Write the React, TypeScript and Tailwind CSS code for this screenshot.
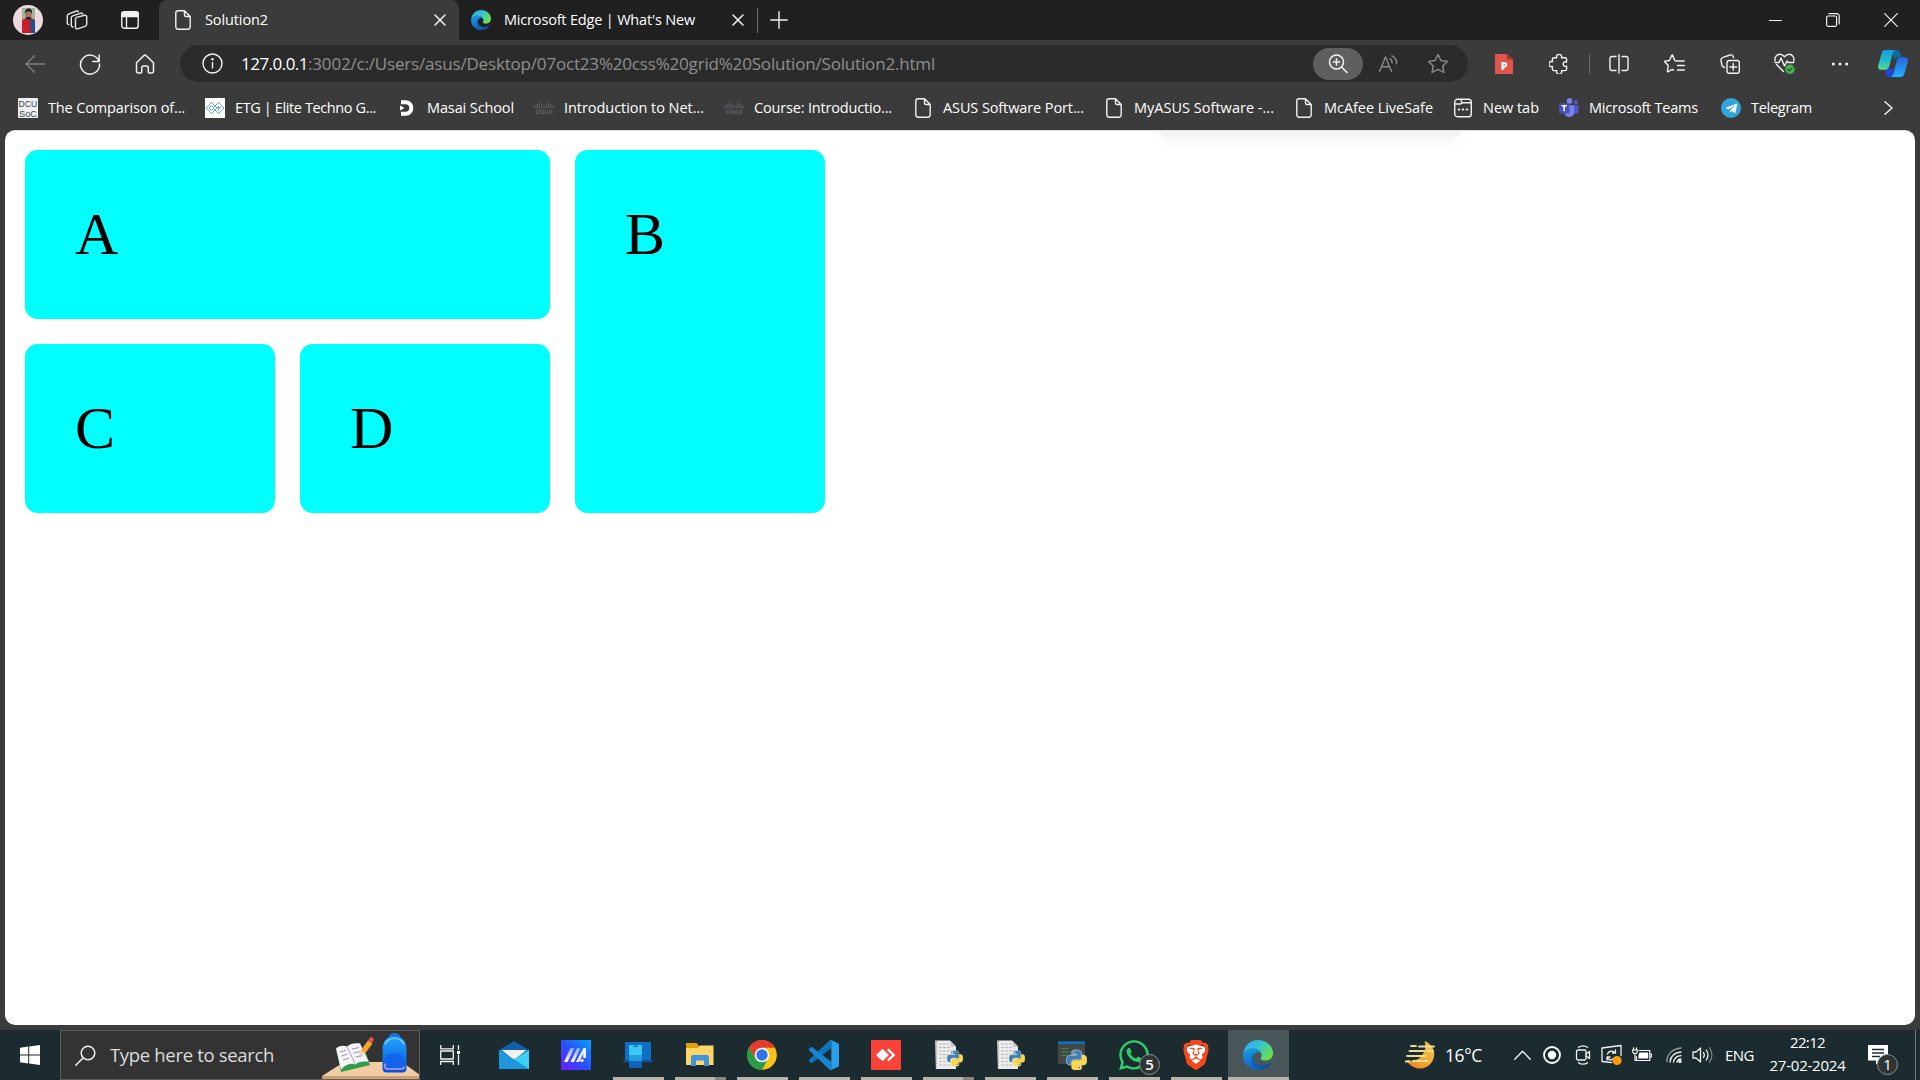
import { useLayoutEffect, useRef, type ReactNode } from "react";
import { FaWhatsapp, FaTelegramPlane } from "react-icons/fa";
import { SiBrave } from "react-icons/si";

/** One line of text whose tracking is tuned so that it spans `w` pixels. */
function Fit({ w, className = "", children }: { w: number; className?: string; children: string }) {
  const ref = useRef<HTMLSpanElement>(null);
  useLayoutEffect(() => {
    const el = ref.current;
    if (!el) return;
    el.style.letterSpacing = "0px";
    const natural = el.getBoundingClientRect().width;
    el.style.letterSpacing = `${(w - natural) / children.length}px`;
  }, [w, children]);
  return (
    <span ref={ref} className={`inline-block shrink-0 whitespace-pre ${className}`}>
      {children}
    </span>
  );
}

function Cell({ className, children }: { className: string; children?: ReactNode }) {
  return <div className={`flex shrink-0 items-center justify-center ${className}`}>{children}</div>;
}

function Line({
  size = 20,
  h,
  sw = 1.3,
  color = "#f2f2f2",
  children,
}: {
  size?: number;
  h?: number;
  sw?: number;
  color?: string;
  children: ReactNode;
}) {
  const hh = h ?? size;
  return (
    <svg
      className="shrink-0"
      width={size}
      height={hh}
      viewBox={`0 0 ${size} ${hh}`}
      fill="none"
      stroke={color}
      strokeWidth={sw}
      strokeLinecap="round"
      strokeLinejoin="round"
    >
      {children}
    </svg>
  );
}

const FileIcon = () => (
  <Line size={16} h={20} sw={1.4}>
    <path d="M3 .8h6.500l5.700 5.700V17a2.200 2.200 0 0 1-2.200 2.200H3A2.200 2.200 0 0 1 .8 17V3A2.200 2.200 0 0 1 3 .8zM9.500 .8v4.200A1.500 1.500 0 0 0 11 6.500h4.200" />
  </Line>
);

const CloseIcon = () => (
  <Line size={12} sw={1.5}>
    <path d="M1 1l10 10M11 1L1 11" />
  </Line>
);

function EdgeLogo({ size, id }: { size: number; id: string }) {
  return (
    <svg width={size} height={size} viewBox="0 0 30 30" className="shrink-0">
      <defs>
        <linearGradient id={`${id}a`} x1="0" y1="0" x2="1" y2=".55">
          <stop offset="0" stopColor="#2aa7e8" />
          <stop offset=".5" stopColor="#35c1d8" />
          <stop offset="1" stopColor="#67e04f" />
        </linearGradient>
        <linearGradient id={`${id}b`} x1="0" y1="0" x2=".3" y2="1">
          <stop offset="0" stopColor="#1b9de2" />
          <stop offset="1" stopColor="#1066c4" />
        </linearGradient>
        <linearGradient id={`${id}c`} x1="0" y1="0" x2="1" y2="0">
          <stop offset="0" stopColor="#1560b5" />
          <stop offset="1" stopColor="#0d4b91" />
        </linearGradient>
      </defs>
      <path
        d="M.3 13.500C1.200 5.800 7.200 0 15 0c8.700 0 15 6.300 15 13.200 0 4.600-3.600 7.400-7.500 7.400-3 0-4.900-1.100-4.900-2.200 0-.7 1-1.200 1-3.200 0-2.700-2.700-5.700-7.400-6.400C6.500 8.300 2.300 10.300.3 13.500z"
        fill={`url(#${id}a)`}
      />
      <path
        d="M0 15.500C.2 11.500 4.500 8.500 9.500 8.500c4.700 0 8.300 2.500 9 5.500-1-1.400-2.700-2.200-4.300-1.800-2.700.6-4.700 3.500-4.700 6.800 0 5 3.500 9.200 8.200 10.700-.9.200-1.800.3-2.700.3C6.500 30 0 23.500 0 15.500z"
        fill={`url(#${id}b)`}
      />
      <path
        d="M12.600 13.300c-1.400 1-2.300 2.500-2.300 4.200 0 4.500 4.500 7.700 9.700 7.700 3.100 0 5.600-1 7.500-2.200.5-.3 1 .1.700.6-2 3.300-5.700 6.200-10.500 6.200-5.900 0-9.500-5-9.500-10 0-3 1.700-5.400 4.400-6.500z"
        fill={`url(#${id}c)`}
      />
    </svg>
  );
}

const PY_BLUE =
  "M14.25.18l.9.2.73.26.59.3.45.32.34.34.25.34.16.33.1.3.04.26.02.2-.01.13V8.5l-.05.63-.13.55-.21.46-.26.38-.3.31-.33.25-.35.19-.35.14-.33.1-.3.07-.26.04-.21.02H8.77l-.69.05-.59.14-.5.22-.41.27-.33.32-.27.35-.2.36-.15.37-.1.35-.07.32-.04.27-.02.21v3.06H3.17l-.21-.03-.28-.07-.32-.12-.35-.18-.36-.26-.36-.36-.35-.46-.32-.59-.28-.73-.21-.88-.14-1.05-.05-1.23.06-1.22.16-1.04.24-.87.32-.71.36-.57.4-.44.42-.33.42-.24.4-.16.36-.1.32-.05.24-.01h.16l.06.01h8.16v-.83H6.18l-.01-2.75-.02-.37.05-.34.11-.31.17-.28.25-.26.31-.23.38-.2.44-.18.51-.15.58-.12.64-.1.71-.06.77-.04.84-.02 1.27.05zm-6.3 1.98l-.23.33-.08.41.08.41.23.34.33.22.41.09.41-.09.33-.22.23-.34.08-.41-.08-.41-.23-.33-.33-.22-.41-.09-.41.09z";
const PY_YELLOW =
  "M21.1 6.11l.28.06.32.12.35.18.36.27.36.35.35.47.32.59.28.73.21.88.14 1.04.05 1.23-.06 1.23-.16 1.04-.24.86-.32.71-.36.57-.4.45-.42.33-.42.24-.4.16-.36.09-.32.05-.24.02-.16-.01h-8.22v.82h5.84l.01 2.76.02.36-.05.34-.11.31-.17.29-.25.25-.31.24-.38.2-.44.17-.51.15-.58.13-.64.09-.71.07-.77.04-.84.01-1.27-.04-1.07-.14-.9-.2-.73-.25-.59-.3-.45-.33-.34-.34-.25-.34-.16-.33-.1-.3-.04-.25-.02-.2.01-.13v-5.34l.05-.64.13-.54.21-.46.26-.38.3-.32.33-.24.35-.2.35-.14.33-.1.3-.06.26-.04.21-.02.13-.01h5.84l.69-.05.59-.14.5-.21.41-.28.33-.32.27-.35.2-.36.15-.36.1-.35.07-.32.04-.28.02-.21V6.07h2.09l.14.01zm-6.47 14.25l-.23.33-.08.41.08.41.23.33.33.23.41.08.41-.08.33-.23.23-.33.08-.41-.08-.41-.23-.33-.33-.23-.41-.08-.41.08z";

const PySnakes = ({ transform }: { transform: string }) => (
  <g transform={transform}>
    <path d={PY_BLUE} fill="#3f7fb5" stroke="#dfe6ea" strokeWidth=".7" />
    <path d={PY_YELLOW} fill="#ffd83f" stroke="#f4ecd0" strokeWidth=".7" />
  </g>
);

/* ---------- tab strip ---------- */

function TabStrip() {
  return (
    <div className="flex h-[40px] items-center bg-[#202020]">
      <Cell className="w-[56px]">
        <svg width="30" height="30" viewBox="0 0 30 30">
          <defs>
            <clipPath id="av">
              <circle cx="15" cy="15" r="15" />
            </clipPath>
          </defs>
          <g clipPath="url(#av)">
            <rect width="30" height="30" fill="#ecd9de" />
            <rect x="9" y="3" width="13" height="25" fill="#9db59a" />
            <path d="M9 15l4-2h5l4 2v13H9z" fill="#c3202c" />
            <path d="M17 14l5 1.500V28h-4z" fill="#1d4f8c" />
            <ellipse cx="15.500" cy="9.500" rx="3.300" ry="4.600" fill="#a8765a" />
            <path d="M12 9c-.5-4 1.500-5.500 3.700-5.500S19.500 5 19 9c-.5-2-1.500-2.500-3.500-2.500S12.500 7 12 9zM13 12h5c0 2-1 2.800-2.500 2.800S13 14 13 12z" fill="#2a2222" />
          </g>
        </svg>
      </Cell>
      <Cell className="w-[42px]">
        <Line size={22} h={20} sw={1.4} color="#e6e6e6">
          <path d="M10.500 7.400L18.700 5.300a1.600 1.600 0 0 1 2 1.500v7.400a2.200 2.200 0 0 1-1.600 2.100l-7.600 2.500a1.500 1.500 0 0 1-2-1.400V9a1.600 1.600 0 0 1 1-1.600z" />
          <path d="M7 17A1.700 1.700 0 0 1 5.300 15.300V8a2.200 2.200 0 0 1 1.500-2.100l8.100-2.700a1.500 1.500 0 0 1 1.900.9" />
          <path d="M3 14.600A1.700 1.700 0 0 1 1.300 12.900V6a2.400 2.400 0 0 1 1.600-2.200L10.500 1a1.500 1.500 0 0 1 1.900.8" />
        </Line>
      </Cell>
      <Cell className="w-[61px] pl-[3px]">
        <Line size={18} sw={1.4}>
          <rect x=".8" y=".8" width="16.400" height="16.400" rx="2.500" />
          <path d="M1 1.500h16V5.500H1z" fill="#f2f2f2" />
          <path d="M5.500 6v11" />
        </Line>
      </Cell>

      <div className="flex h-full w-[300px] items-center rounded-t-[8px] bg-[#3b3b3b] pl-[16px]">
        <FileIcon />
        <div className="ml-[14px] w-[227px] pb-[2px]">
          <Fit w={63} className="text-[14.500px] text-white">Solution2</Fit>
        </div>
        <div className="pl-[2px]">
          <CloseIcon />
        </div>
      </div>

      <div className="flex h-full items-center pl-[12px]">
        <EdgeLogo size={20} id="tab" />
        <div className="ml-[13px] w-[228px] pb-[2px]">
          <Fit w={191} className="text-[14.500px] text-white">Microsoft Edge | What's New</Fit>
        </div>
        <CloseIcon />
        <div className="ml-[13px] h-[25px] w-px bg-[#6a6a6a]" />
        <div className="ml-[12px]">
          <Line size={18} sw={1.4}>
            <path d="M9 .8v16.400M.8 9h16.400" />
          </Line>
        </div>
      </div>

      <div className="ml-auto flex">
        <Cell className="w-[57px]">
          <Line size={13} sw={1.2}>
            <path d="M.5 6.500h12" />
          </Line>
        </Cell>
        <Cell className="w-[58px]">
          <Line size={14} sw={1.2}>
            <rect x=".6" y="3" width="10" height="10.300" rx="1.500" />
            <path d="M3 .7h8a2.200 2.200 0 0 1 2.200 2.200V11" />
          </Line>
        </Cell>
        <Cell className="w-[58px]">
          <Line size={14} sw={1.2}>
            <path d="M.7 .7l12.600 12.600M13.300 .7L.7 13.300" />
          </Line>
        </Cell>
      </div>
    </div>
  );
}

/* ---------- toolbar ---------- */

function Toolbar() {
  return (
    <div className="flex h-[47px] items-center pl-[7px]">
      <Cell className="w-[55px]">
        <Line size={20} h={18} sw={1.4} color="#7d7d7d">
          <path d="M19.500 9H1M9.500 .8L1 9l8.500 8.200" />
        </Line>
      </Cell>
      <Cell className="w-[55px]">
        <Line size={22} sw={1.500}>
          <path d="M20 8.500A9.500 9.500 0 1 0 20.500 11M20.200 2v6.500h-6.500" />
        </Line>
      </Cell>
      <Cell className="w-[55px]">
        <Line size={20} sw={1.500}>
          <path d="M1.500 8.800L8.700 1.700a1.900 1.900 0 0 1 2.600 0l7.200 7.100V17a2 2 0 0 1-2 2h-2.200a1 1 0 0 1-1-1v-4a2 2 0 0 0-2-2H8.700a2 2 0 0 0-2 2v4a1 1 0 0 1-1 1H3.500a2 2 0 0 1-2-2z" />
        </Line>
      </Cell>

      <div className="ml-[8px] flex h-[37px] w-[1288px] items-center rounded-full bg-[#2b2b2b] pl-[22px] pr-[6px]">
        <Line size={21} sw={1.400}>
          <circle cx="10.500" cy="10.500" r="9.500" />
          <path d="M10.500 9.500v5.500" />
          <circle cx="10.500" cy="6.300" r=".6" fill="#f2f2f2" />
        </Line>
        <div className="ml-[18px] flex items-center text-[17px]">
          <Fit w={67} className="text-white">127.0.0.1</Fit>
          <Fit w={627} className="text-[#8f8f8f]">
            :3002/c:/Users/asus/Desktop/07oct23%20css%20grid%20Solution/Solution2.html
          </Fit>
        </div>
        <Cell className="ml-auto h-[32px] w-[50px] rounded-full bg-[#5f5f5f]">
          <Line size={20} sw={1.500}>
            <circle cx="8.500" cy="8" r="7" />
            <path d="M13.500 13l5.500 5.500M8.500 5v6M5.500 8h6" />
          </Line>
        </Cell>
        <Cell className="w-[50px]">
          <Line size={20} color="#8b8b8b" sw={1.400}>
            <path d="M1.500 17.500L7.500 3l6 14.500M3.600 12.700h7.800M12 4.800c1.500.8 2.200 2.400 2 4M14 1.800c3.200 1.500 4.900 4.600 4.600 8" />
          </Line>
        </Cell>
        <Cell className="w-[49px]">
          <Line size={22} h={21} color="#8b8b8b" sw={1.400}>
            <path d="M11 1.500l2.900 6 6.600.9-4.800 4.600 1.200 6.500L11 16.400l-5.900 3.100 1.200-6.500L1.500 8.400l6.600-.9z" />
          </Line>
        </Cell>
      </div>

      <Cell className="ml-[8px] w-[55px]">
        <svg width="18" height="20" viewBox="0 0 18 20">
          <path d="M0 0h12l6 5.500V20H0z" fill="#e0554b" />
          <path d="M12 0l6 5.500h-6z" fill="#a93228" />
          <text x="9" y="15.500" textAnchor="middle" fontSize="10.500" fontWeight="800" fontFamily="Open Sans, sans-serif" fill="#fff">
            P
          </text>
        </svg>
      </Cell>
      <Cell className="w-[55px]">
        <Line size={20} h={20} sw={1.400}>
          <path d="M5 3.800h2.700a2.600 2.600 0 1 1 4.800 0H16a1.600 1.600 0 0 1 1.600 1.600v2.700a2.300 2.300 0 0 0-3.500 2c0 1.700 2 2.800 3.500 2V15a1.600 1.600 0 0 1-1.600 1.600h-3.500a2.600 2.600 0 1 1-4.800 0H5A1.600 1.600 0 0 1 3.400 15v-2.500a2.600 2.600 0 1 1 0-4.800V5.400A1.600 1.600 0 0 1 5 3.800z" />
        </Line>
      </Cell>
      <div className="ml-[3px] h-[20px] w-px bg-[#6a6a6a]" />
      <Cell className="ml-[1px] w-[55px]">
        <Line size={20} sw={1.400}>
          <path d="M7 2.500H3A2 2 0 0 0 1 4.500v10A2 2 0 0 0 3 16.500H7M13 2.500h4A2 2 0 0 1 19 4.500v10a2 2 0 0 1-2 2h-4M10 .5v18.500" />
        </Line>
      </Cell>
      <Cell className="w-[56px]">
        <Line size={21} h={20} sw={1.400}>
          <path d="M13 7l-2-.3L8.600 1.400a.4.400 0 0 0-.8 0L5.400 6.500l-4.300.6a.5.500 0 0 0-.2.900l3.400 3.500-.9 5.600a.5.500 0 0 0 .8.500l4-2.200 1.300.7M13 7h7.300M13.500 11.500h6.800M13.500 16h6.800" />
        </Line>
      </Cell>
      <Cell className="w-[55px]">
        <Line size={20} sw={1.400}>
          <rect x="7" y="6.500" width="12.300" height="12.700" rx="2.200" />
          <path d="M13.200 9.500v6.800M9.800 13h6.800M4.500 13.500L3.500 13A3 3 0 0 1 1.700 10L1 6.500a2.800 2.800 0 0 1 2-3.200L10 1a2.700 2.700 0 0 1 3.300 1.800l.2.700" />
        </Line>
      </Cell>
      <Cell className="w-[55px]">
        <Line size={21} h={21} sw={1.400}>
          <path d="M1 7.800C.2 4 3 1.300 5.700 1.300c2.200 0 3.500 1 4.800 2.500 1.300-1.500 2.600-2.500 4.800-2.500C18 1.300 20.500 4 19.800 7.800M2.500 11.500l7 7M1 9.500h4l2-4.500 3.500 8 2.500-5 1.200 1.500h5.600" />
          <circle cx="16" cy="16.200" r="4.700" fill="#4caf50" stroke="none" />
          <path d="M13.900 16.400l1.400 1.400 2.800-3" stroke="#234d25" strokeWidth="1.200" />
        </Line>
      </Cell>
      <Cell className="w-[55px]">
        <svg width="18" height="4" viewBox="0 0 18 4" fill="#f2f2f2">
          <circle cx="2.300" cy="2" r="1.500" />
          <circle cx="9" cy="2" r="1.500" />
          <circle cx="15.700" cy="2" r="1.500" />
        </svg>
      </Cell>
      <Cell className="w-[51px]">
        <svg width="30" height="27" viewBox="0 0 30 27">
          <defs>
            <linearGradient id="cpA" x1="0" y1="0" x2="0" y2="1">
              <stop offset="0" stopColor="#159fe0" />
              <stop offset=".5" stopColor="#1fb6c9" />
              <stop offset="1" stopColor="#5ad98c" />
            </linearGradient>
            <linearGradient id="cpB" x1="0" y1="0" x2="0" y2="1">
              <stop offset="0" stopColor="#2a62de" />
              <stop offset="1" stopColor="#1fb2fb" />
            </linearGradient>
          </defs>
          <path d="M14 0h4.500c2 0 3 1 3.700 3l1.400 4.200H19l-3 2z" fill="#0b6c9e" />
          <path d="M16 27h-4.500c-2 0-3-1-3.700-3L6.500 19.500H11l3-2z" fill="#2344dc" />
          <path d="M7.500 0H18c-2 0-2.800 1.800-3.300 3.500l-3.200 12c-.8 3-1.900 4.200-4.500 4.200H3c-2.500 0-3.400-1.900-2.800-4.200L3.700 3C4.300 1 5.500 0 7.500 0z" fill="url(#cpA)" />
          <path d="M22.500 27H12c2 0 2.800-1.800 3.300-3.500l3.200-12c.8-3 1.900-4.200 4.500-4.200h4c2.500 0 3.400 1.900 2.800 4.200L26.300 24c-.6 2-1.800 3-3.800 3z" fill="url(#cpB)" />
        </svg>
      </Cell>
    </div>
  );
}

/* ---------- bookmarks ---------- */

const DcuIcon = () => (
  <svg width="20" height="20" viewBox="0 0 20 20">
    <rect width="20" height="20" rx="1" fill="#eef0f2" />
    <g fontFamily="Liberation Sans, sans-serif" fontSize="9.500" fill="#3a4450">
      <text x=".6" y="9" textLength="18.500" lengthAdjust="spacingAndGlyphs">DCU</text>
      <text x="1" y="18.500" textLength="18" lengthAdjust="spacingAndGlyphs">SoC</text>
    </g>
  </svg>
);

const EtgIcon = () => (
  <svg width="20" height="20" viewBox="0 0 20 20" fill="none" stroke="#6aa5dc" strokeWidth="1">
    <rect width="20" height="20" fill="#fff" stroke="none" />
    <path d="M1 10l5.500-5.500L12 10l-5.500 5.500zM8 10l5.500-5.500L19 10l-5.500 5.500zM4 10l2.500-2.500L9 10l-2.500 2.500zM11.500 9.500h4M13.500 8v5" />
  </svg>
);

const MasaiIcon = () => (
  <svg width="20" height="20" viewBox="0 0 20 20">
    <path d="M4 4.300h4.500c3.700 0 5.800 2.500 5.800 5.700s-2.100 5.700-5.800 5.700H4" fill="none" stroke="#fff" strokeWidth="4" />
    <path d="M3 7.500L7.500 10 3 12.500z" fill="#fff" />
  </svg>
);

const CiscoIcon = () => (
  <svg width="20" height="20" viewBox="0 0 20 20">
    <path
      d="M.8 8v2M3.100 6.500v3.500M5.400 5v5M7.700 6.500v3.500M10 8v2M12.300 6.500v3.500M14.600 5v5M16.900 6.500v3.500M19.200 8v2"
      stroke="#5a5a60"
      strokeWidth="1.300"
      strokeLinecap="round"
    />
    <text x="1.500" y="15.800" fontSize="6.500" fontWeight="700" fontFamily="Open Sans, sans-serif" fill="#626268" textLength="17">
      cisco
    </text>
  </svg>
);

const NewTabIcon = () => (
  <Line size={20} sw={1.400}>
    <rect x="1.700" y="1.300" width="16.600" height="17.400" rx="2.800" />
    <path d="M1.700 6h5.500c1.300 0 1.300-1.200 2-1.200h9M7.700 1.500l1.500 3.200" />
    <path d="M5.800 11.500h.4M9.800 11.500h.4M13.800 11.500h.4" strokeWidth="2.200" />
  </Line>
);

const TeamsIcon = () => (
  <svg width="20" height="20" viewBox="0 0 20 20">
    <circle cx="16.800" cy="4.200" r="2" fill="#5059c9" />
    <circle cx="10.500" cy="2.900" r="2.800" fill="#7b83eb" />
    <path d="M13 7.200h6.500v5.600a3.300 3.300 0 0 1-5 2.800z" fill="#5059c9" />
    <path d="M5.500 7.200h9.600v7.300a4.900 4.900 0 0 1-9.600 1z" fill="#7b83eb" />
    <rect y="5.200" width="10.400" height="10.400" rx="1" fill="#464eb8" />
    <path d="M2.700 7.800h5M5.200 7.800v5.500" stroke="#fff" strokeWidth="1.500" />
  </svg>
);

const TelegramIcon = () => (
  <Cell className="size-[20px] rounded-full bg-[#33a5dd]">
    <FaTelegramPlane size={13} color="#fff" />
  </Cell>
);

function Bookmark({ icon, label, w, className = "" }: { icon: ReactNode; label: string; w: number; className?: string }) {
  return (
    <div className={`flex shrink-0 items-center gap-[10px] ${className}`}>
      <Cell className="size-[20px]">{icon}</Cell>
      <Fit w={w} className="pb-px text-[14.500px] text-white">
        {label}
      </Fit>
    </div>
  );
}

function BookmarksBar() {
  return (
    <div className="flex h-[43px] items-center pb-px pl-[18px]">
      <Bookmark className="w-[187px]" icon={<DcuIcon />} label="The Comparison of..." w={137} />
      <Bookmark className="w-[192px]" icon={<EtgIcon />} label="ETG | Elite Techno G..." w={141} />
      <Bookmark className="w-[137px]" icon={<MasaiIcon />} label="Masai School" w={87} />
      <Bookmark className="w-[190px]" icon={<CiscoIcon />} label="Introduction to Net..." w={140} />
      <Bookmark className="w-[189px]" icon={<CiscoIcon />} label="Course: Introductio..." w={138} />
      <Bookmark className="w-[191px]" icon={<FileIcon />} label="ASUS Software Port..." w={141} />
      <Bookmark className="w-[190px]" icon={<FileIcon />} label="MyASUS Software -..." w={140} />
      <Bookmark className="w-[159px]" icon={<FileIcon />} label="McAfee LiveSafe" w={109} />
      <Bookmark className="w-[106px]" icon={<NewTabIcon />} label="New tab" w={56} />
      <Bookmark className="w-[162px]" icon={<TeamsIcon />} label="Microsoft Teams" w={109} />
      <Bookmark className="w-[120px]" icon={<TelegramIcon />} label="Telegram" w={61} />
      <Cell className="ml-[34px] w-[26px]">
        <Line size={9} h={14} sw={1.500}>
          <path d="M1 .8L8 7l-7 6.200" />
        </Line>
      </Cell>
    </div>
  );
}

/* ---------- page ---------- */

function Page() {
  const card = "rounded-[12.5px] bg-[#00ffff] p-[50px]";
  return (
    <main className="relative mx-[5px] h-[895px] overflow-hidden rounded-[10px] border-t border-[#e2e2e2] bg-white pl-[20px] pt-[19px]">
      <div className="absolute left-[1154px] top-[-40px] h-[46px] w-[302px] rounded-b-[8px] bg-[#f3f3f3] shadow-[0_5px_14px_rgba(0,0,0,0.035)]" />
      <div className="grid w-[800px] grid-cols-[250px_250px_250px] grid-rows-[169px_169px] gap-[25px] font-['Liberation_Serif',serif] text-[60px] leading-[69px] text-black">
        <div className={`col-span-2 ${card}`}>A</div>
        <div className={`row-span-2 ${card}`}>B</div>
        <div className={card}>C</div>
        <div className={card}>D</div>
      </div>
    </main>
  );
}

/* ---------- taskbar ---------- */

const SearchArt = () => (
  <svg width="97" height="48" viewBox="0 0 97 48" className="shrink-0">
    <defs>
      <linearGradient id="bag" x1="0" y1="0" x2="0" y2="1">
        <stop offset="0" stopColor="#1fa8ff" />
        <stop offset="1" stopColor="#0a4fd8" />
      </linearGradient>
    </defs>
    <path d="M0 45L22 31h58l18 13v1z" fill="#f2cca3" />
    <path d="M0 45h98v3H0z" fill="#c99f74" />
    <path d="M14.500 20l4.500 21 29-7-5-15z" fill="#2f9e4a" />
    <path d="M14 17.500c3-3 7-3.500 11-2 3-3 8-4 13-3l9 18.500c-5-1-10.500-.5-13.500 2.500-4-1.500-9-.5-14.500 5z" fill="#f7f4fa" />
    <path d="M25 15.500l8 17" stroke="#b8b0c4" strokeWidth="1.200" />
    <path d="M18 21l6-1.800M19.500 25l6-1.800M21 29l6-1.800M30 18l7-1.500M31.500 22l7-1.500M33.500 26l7-1.500" stroke="#9a94a8" strokeWidth="1" />
    <path d="M37 25l2-6 4.500 3z" fill="#f2d3a6" />
    <path d="M39 19l7-9.500 4.500 3-7 9.500z" fill="#f8a52c" />
    <path d="M46 9.500l2-3c1-1.300 4.500 1 3.700 2.500l-1.700 3z" fill="#ef4f4c" />
    <path d="M68 6.500c0-4.500 9-4.500 9 0" fill="none" stroke="#1673e0" strokeWidth="2.500" />
    <path d="M60.500 18c0-8 5-13 12-13s12 5 12 13v19.500c0 2.500-1.500 4-4 4h-16c-2.500 0-4-1.500-4-4z" fill="url(#bag)" />
    <path d="M63 13.500c3-8 16-8 19 0" fill="none" stroke="#9fd4ff" strokeWidth="1.200" />
    <path d="M62.500 31.500c0-6 4-9 10-9s10 3 10 9v5c0 1.500-1 2.500-2.500 2.500H65c-1.500 0-2.500-1-2.500-2.500z" fill="#1264ec" />
    <path d="M63 32.500v3c0 1.800 1 2.500 2.500 2.500h14c1.500 0 2.500-1 2.500-2.500" fill="none" stroke="#c49aff" strokeWidth="1.500" />
  </svg>
);

const MailIcon = () => (
  <svg width="30" height="30" viewBox="0 0 30 30">
    <path d="M0 10L15 1l15 9v6H0z" fill="#0f5fae" />
    <path d="M2.500 10h25L15 20z" fill="#f1f1f1" />
    <path d="M0 10l15 9.500L30 10v19H0z" fill="#2fa4e4" />
    <path d="M30 10v19L15 19.500z" fill="#3fd0f5" />
    <path d="M0 10l30 19H0z" fill="#1f97dc" />
  </svg>
);

const MyAsusIcon = () => (
  <svg width="30" height="30" viewBox="0 0 30 30">
    <defs>
      <linearGradient id="asus" x1="1" y1="0" x2="0" y2="1">
        <stop offset="0" stopColor="#00a3ff" />
        <stop offset=".5" stopColor="#2b50ff" />
        <stop offset="1" stopColor="#6a1cff" />
      </linearGradient>
      <linearGradient id="asusM" x1="0" y1="1" x2="0" y2="0">
        <stop offset="0" stopColor="#fff" />
        <stop offset="1" stopColor="#8fa4ff" />
      </linearGradient>
    </defs>
    <rect width="30" height="30" fill="url(#asus)" />
    <path d="M3 22L9.500 8H13v1L6.500 22zM9.500 22L16 8h3v1l-6 13z" fill="url(#asusM)" />
    <path d="M15 22l7.500-14H25v10h-2.800v-4.500L18.200 22z" fill="#eef1ff" />
    <circle cx="21" cy="20.500" r="1.600" fill="#fff" />
  </svg>
);

const PhoneLinkIcon = () => (
  <svg width="30" height="30" viewBox="0 0 30 30">
    <path d="M2 2h26v19H2z" fill="#0f6fc5" />
    <path d="M0 20h30v1.500l-2 1H2l-2-1z" fill="#0d4f8f" />
    <rect x="6" y="5" width="13" height="23" rx="1" fill="#0f63b8" />
    <path d="M6 5h13v10H6z" fill="#3cc8f2" />
    <path d="M6 15h13v6H6z" fill="#1f9ddf" />
    <path d="M10.500 6.200h4.500" stroke="#0d5a96" strokeWidth="1.200" />
  </svg>
);

const ExplorerIcon = () => (
  <svg width="30" height="30" viewBox="0 0 30 30">
    <path d="M1 3h10.500l2.500 3H28v5H1z" fill="#e09e0c" />
    <path d="M1 8h12l2-2.500h13.500V25H1z" fill="#ffd667" />
    <path d="M6 26V17a2 2 0 0 1 2-2h14a2 2 0 0 1 2 2v9h-5v-5.500h-8V26z" fill="#3f95dc" />
  </svg>
);

const ChromeIcon = () => (
  <svg width="30" height="30" viewBox="0 0 30 30">
    <circle cx="15" cy="15" r="14.800" fill="#fbc116" />
    <path d="M8.800 18.600L2 7.500A15 15 0 0 0 15 30l6.200-11.400z" fill="#2b9b47" />
    <path d="M15 7.800h13.100A15 15 0 0 0 2 7.500l6.800 11z" fill="#e33b2e" />
    <circle cx="15" cy="15" r="7.300" fill="#fff" />
    <circle cx="15" cy="15" r="5.700" fill="#2f74e8" />
  </svg>
);

const VsCodeIcon = () => (
  <svg width="30" height="30" viewBox="0 0 30 30">
    <path d="M22 0v8.500L3.200 22.800a1.200 1.200 0 0 1-1.600-.1L.3 21.400a1.200 1.200 0 0 1 0-1.800L20.500 .6z" fill="#0d74bd" />
    <path d="M22 30v-8.500L3.200 7.200a1.200 1.200 0 0 0-1.600.1L.3 8.600a1.200 1.200 0 0 0 0 1.800l20.200 19z" fill="#1686d0" />
    <path d="M22 0l7 3.200a1.800 1.800 0 0 1 1 1.600v20.400a1.800 1.800 0 0 1-1 1.600L22 30c-.8 0-1.300-.3-1.600-.7 .9.4 1.900-.2 1.900-1.200V1.900C22.300.9 21.300.3 20.400.7 20.700.3 21.200 0 22 0z" fill="#27a1ee" />
  </svg>
);

const AnyDeskIcon = () => (
  <svg width="30" height="30" viewBox="0 0 30 30">
    <rect width="30" height="30" fill="#fb4238" />
    <path d="M5 15l6.500-6.300L18 15l-6.500 6.300z" fill="#fff" />
    <path d="M16.800 9.300l5.900 5.700-5.900 5.700" fill="none" stroke="#fff" strokeWidth="2.300" />
  </svg>
);

const PyFileIcon = () => (
  <svg width="30" height="30" viewBox="0 0 30 30">
    <path d="M2 .5h15l6 6V29H3z" fill="#ececec" />
    <path d="M17 .5l6 6-5 .8z" fill="#c9c9c9" />
    <path d="M6 4h10M6 7.500h11M6 11h13M6 14.500h9M6 18h8M6 21.500h9M6 25h11" stroke="#b9b9b9" strokeWidth="1" strokeDasharray="3 1" />
    <path d="M3 1v27" stroke="#7a7a7a" strokeWidth="1.500" strokeDasharray="1 1.200" />
    <PySnakes transform="translate(14 10.500) scale(.66)" />
  </svg>
);

const PyConsoleIcon = () => (
  <svg width="30" height="30" viewBox="0 0 30 30">
    <path d="M1 1.500h27V24H1z" fill="#454647" />
    <path d="M1 1.500h27V4H1z" fill="#1173c7" />
    <path d="M4.500 8.500h7M4.500 12h9M4.500 15.500h6" stroke="#3c8a3c" strokeWidth="1.200" />
    <PySnakes transform="translate(9.500 10) scale(.84)" />
  </svg>
);

const WhatsAppIcon = () => (
  <div className="relative size-[30px]">
    <FaWhatsapp size={34} color="#25d366" className="absolute left-[-2px] top-[-2px]" />
    <div className="absolute left-[20px] top-[14px] flex size-[21px] items-center justify-center rounded-full border border-[#8c9293] bg-[#2f3435] text-[15px] font-semibold leading-none text-white">
      5
    </div>
  </div>
);

const BraveIcon = () => (
  <div className="relative size-[30px]">
    <svg width="30" height="30" viewBox="0 0 30 30" className="absolute left-0 top-0">
      <path d="M6 7l9-3 9 3 1 7-4 9-6 4-6-4-4-9z" fill="#fff" />
    </svg>
    <SiBrave size={30} color="#f9471c" className="absolute left-0 top-0" />
  </div>
);

function TaskButton({ icon, mark = "none", active = false }: { icon: ReactNode; mark?: "none" | "one" | "many"; active?: boolean }) {
  return (
    <div className={`flex h-full w-[61px] shrink-0 flex-col items-center ${active ? "bg-[#49565a]" : ""}`}>
      <div className="flex h-[47px] items-center justify-center pr-px pt-[3px]">{icon}</div>
      {mark !== "none" && (
        <div className={`flex h-[3px] bg-[#b9b3a9] ${active ? "w-full" : "w-[51px]"}`}>
          {mark === "many" && <div className="ml-auto w-[11px] bg-[#8a8780]" />}
        </div>
      )}
    </div>
  );
}

function Tray() {
  return (
    <div className="ml-auto flex h-full items-center text-white">
      <svg width="30" height="30" viewBox="0 0 30 30" className="shrink-0">
        <defs>
          <linearGradient id="moon" x1="1" y1="0" x2="0" y2="1">
            <stop offset="0" stopColor="#f7d046" />
            <stop offset="1" stopColor="#ee7f1e" />
          </linearGradient>
        </defs>
        <path d="M19.500 1C27 4 31 11 28.500 18.500c-2.500 8-10.500 11.500-17.500 9.500C6 26.500 3 23.500 1.500 20c4 1.500 9.500 1 13.500-2.500 5-4.500 6.500-10.500 4.500-16.500z" fill="url(#moon)" />
        <path d="M6 6h5M14 6.500h15M4.500 11h15M22 11h6M2 16h19M8 21h15M.5 21.500h4" stroke="#ecdc9a" strokeWidth="1.800" strokeLinecap="round" />
      </svg>
      <div className="ml-[10px] w-[67px]">
        <Fit w={37} className="text-[17.500px]">16°C</Fit>
      </div>
      <Cell className="w-[20px]">
        <Line size={17} h={10} sw={1.400}>
          <path d="M.8 9.200l7.700-8 7.700 8" />
        </Line>
      </Cell>
      <Cell className="ml-[4px] w-[32px]">
        <svg width="20" height="20" viewBox="0 0 20 20">
          <circle cx="10" cy="10" r="8" fill="none" stroke="#fff" strokeWidth="1.800" />
          <circle cx="10" cy="10" r="4.200" fill="#fff" />
        </svg>
      </Cell>
      <Cell className="w-[30px]">
        <Line size={16} h={20} sw={1.300}>
          <rect x="1.500" y="5" width="9.500" height="10" rx="1.500" />
          <path d="M11 9l3.500-2.500v7L11 11M3.500 2.300c2.500-2 6.500-2 9 0M3.500 17.700c2.500 2 6.500 2 9 0" />
        </Line>
      </Cell>
      <Cell className="w-[29px] pr-[2px]">
        <Line size={22} h={22} sw={1.300}>
          <path d="M1 4L20 1.500v10M1 4v13.500L10.500 18.500" />
          <path d="M6.500 10c.8-3 5.500-4 7.500-1M14.500 6v3h-3M6 16v-3h3M6.300 13.500c1.200 2.500 3.500 3 5 1.500" />
          <circle cx="16" cy="16.500" r="4.600" fill="#ff9a0a" stroke="none" />
        </Line>
      </Cell>
      <Cell className="w-[31px] pr-[2px]">
        <Line size={20} h={16} sw={1.200}>
          <path d="M7 3.500h10.800v10H4.500V9.500" />
          <path d="M18 7h1.400v3H18" />
          <path d="M7.500 5.500h8.700v6H6.500V8z" fill="#fff" stroke="none" />
          <path d="M1.500 .8v2M4.500 .8v2M.7 2.800h4.600v2.400L4 6.500H2L.7 5.200zM3 6.500V13.500h1.500" />
        </Line>
      </Cell>
      <Cell className="w-[31px]">
        <Line size={16} sw={1.300}>
          <path d="M.8 14.500C1.300 7 6.500 1.800 15 1" stroke="#9aa3a5" />
          <path d="M4 15C4.600 9.500 8.600 5.500 15 5M7.500 15c.6-3.300 3.500-6 7.500-6.300M11 15.200c.4-1.700 1.800-3 4-3.200" />
          <circle cx="14" cy="14.500" r="1" fill="#fff" />
        </Line>
      </Cell>
      <Cell className="w-[29px] pr-[3px]">
        <Line size={21} h={18} sw={1.300}>
          <path d="M1 6h3L8.500 2v14L4 12H1z" />
          <path d="M11.500 6.500c1 1.500 1 3.500 0 5M14.300 4c2 3 2 7 0 10" />
          <path d="M17.500 1.800c3 4.500 3 10 0 14.400" stroke="#758185" />
        </Line>
      </Cell>
      <Fit w={29} className="ml-[7px] text-[15px]">ENG</Fit>
      <div className="ml-[15px] flex w-[77px] flex-col items-center pb-[2px] text-[15px] leading-[23px]">
        <Fit w={35}>22:12</Fit>
        <Fit w={76}>27-02-2024</Fit>
      </div>
      <div className="relative ml-[22px] h-[22px] w-[47px]">
        <svg width="22" height="22" viewBox="0 0 22 22">
          <path d="M0 1h20v15.500h-8l-4 4v-4H0z" fill="#fff" />
          <path d="M4 5.500h12M4 9h12M4 12.500h8" stroke="#1c2c31" strokeWidth="1.300" />
        </svg>
        <div className="absolute left-[9px] top-[10px] flex size-[21px] items-center justify-center rounded-full border border-[#8c9293] bg-[#2f3435] text-[15px] leading-none text-white">
          1
        </div>
      </div>
      <div className="h-full w-[5px] border-l border-[#6f7a7d]" />
    </div>
  );
}

function Taskbar() {
  return (
    <div className="flex h-[50px] items-center bg-[#1b2b30]">
      <Cell className="w-[60px]">
        <svg width="20" height="20" viewBox="0 0 20 20" fill="#fff">
          <path d="M0 2.800L8.200 1.600V9.500H0zM9.200 1.500L20 0v9.500H9.200zM0 10.500h8.200v7.900L0 17.200zM9.200 10.500H20V20L9.200 18.500z" />
        </svg>
      </Cell>
      <div className="flex h-full w-[360px] items-center border border-[#5c5c5c] bg-[#333333] pl-[14px]">
        <Line size={21} sw={1.500}>
          <circle cx="13" cy="8" r="6.800" />
          <path d="M8.200 12.800L.8 20.200" />
        </Line>
        <div className="ml-[14px] w-[212px] shrink-0">
          <Fit w={164} className="text-[18.500px] text-[#dcdcdc]">Type here to search</Fit>
        </div>
        <SearchArt />
      </div>
      <Cell className="w-[60px]">
        <Line size={20} sw={1.300}>
          <path d="M.7 .5v3.300h12.600V.5M.7 19.500v-3h12.600v3M.7 6h12.600v8H.7zM18.500 .5v4M18.500 10v9.500" />
          <path d="M17 6h3v3h-3z" fill="#fff" stroke="none" />
        </Line>
      </Cell>
      <div className="flex h-full gap-px pl-[4px]">
        <TaskButton icon={<MailIcon />} />
        <TaskButton icon={<MyAsusIcon />} />
        <TaskButton icon={<PhoneLinkIcon />} mark="one" />
        <TaskButton icon={<ExplorerIcon />} mark="many" />
        <TaskButton icon={<ChromeIcon />} mark="one" />
        <TaskButton icon={<VsCodeIcon />} mark="one" />
        <TaskButton icon={<AnyDeskIcon />} mark="one" />
        <TaskButton icon={<PyFileIcon />} mark="many" />
        <TaskButton icon={<PyFileIcon />} mark="one" />
        <TaskButton icon={<PyConsoleIcon />} mark="one" />
        <TaskButton icon={<WhatsAppIcon />} mark="one" />
        <TaskButton icon={<BraveIcon />} mark="one" />
        <TaskButton icon={<EdgeLogo size={30} id="task" />} mark="one" active />
      </div>
      <Tray />
    </div>
  );
}

export default function App() {
  return (
    <div className="flex h-[1080px] w-[1920px] flex-col overflow-hidden bg-[#3b3b3b] font-['Open_Sans','Noto_Sans',sans-serif]">
      <TabStrip />
      <Toolbar />
      <BookmarksBar />
      <Page />
      <div className="h-[5px]" />
      <Taskbar />
    </div>
  );
}
